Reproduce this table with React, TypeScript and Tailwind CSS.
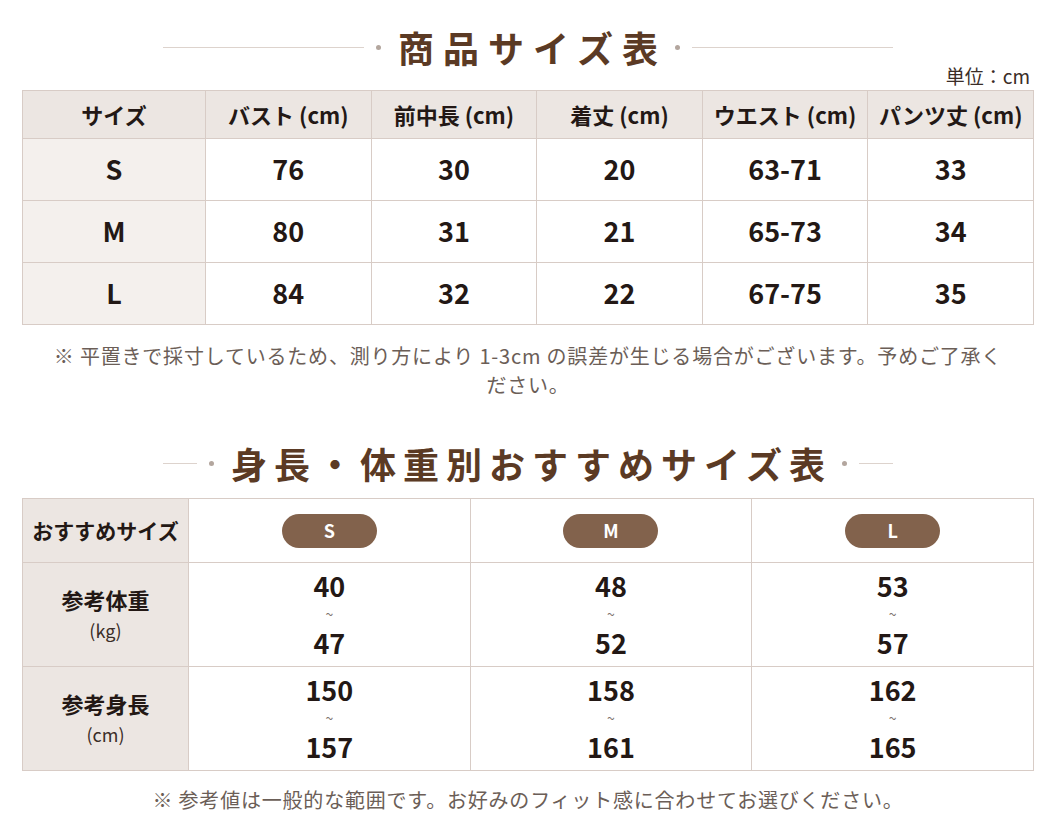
import React from 'react';

const font = { fontFamily: '"Noto Sans CJK JP", "Noto Sans", sans-serif' };

const headers = ['サイズ', 'バスト (cm)', '前中長 (cm)', '着丈 (cm)', 'ウエスト (cm)', 'パンツ丈 (cm)'];

const rows = [
  ['S', '76', '30', '20', '63-71', '33'],
  ['M', '80', '31', '21', '65-73', '34'],
  ['L', '84', '32', '22', '67-75', '35'],
];

const recommend = [
  { size: 'S', weight: ['40', '47'], height: ['150', '157'] },
  { size: 'M', weight: ['48', '52'], height: ['158', '161'] },
  { size: 'L', weight: ['53', '57'], height: ['162', '165'] },
];

function Heading({ text, wide }: { text: string; wide?: boolean }) {
  return (
    <div className="mx-auto flex h-[50px] w-[730px] items-center">
      <div className="h-px flex-1 bg-[#ddd3cd]" />
      <div className="ml-[12px] mr-[17px] h-[5px] w-[5px] rounded-full bg-[#b3a69e]" />
      <div
        className={
          wide
            ? 'text-[36px] font-bold leading-none tracking-[9px] mr-[-9px] text-[#5b3a24]'
            : 'text-[36px] font-bold leading-none tracking-[7px] mr-[-7px] text-[#5b3a24]'
        }
      >
        {text}
      </div>
      <div className="ml-[17px] mr-[12px] h-[5px] w-[5px] rounded-full bg-[#b3a69e]" />
      <div className="h-px flex-1 bg-[#ddd3cd]" />
    </div>
  );
}

function Range({ values }: { values: string[] }) {
  return (
    <div className="flex flex-col items-center text-[#231815]">
      <span className="text-[27px] font-bold leading-[30px]">{values[0]}</span>
      <span className="text-[14px] leading-[27px] text-[#7d726c]">~</span>
      <span className="text-[27px] font-bold leading-[30px]">{values[1]}</span>
    </div>
  );
}

export default function App() {
  return (
    <div style={font} className="w-[1056px] bg-white px-[22px] pt-[22px] pb-[12px] text-[#231815]">
      <Heading text="商品サイズ表" wide />
      <div className="mt-[-6px] h-[20px] pr-[4px] text-right text-[19px] leading-[20px] text-[#3a2d27]">単位：cm</div>

      <table className="mt-[4px] w-[1012px] table-fixed border-collapse">
        <colgroup>
          <col className="w-[183px]" />
          <col />
          <col />
          <col />
          <col />
          <col />
        </colgroup>
        <thead>
          <tr className="h-[48px] bg-[#ece6e2]">
            {headers.map((h) => (
              <th key={h} className="border border-[#d8ccc6] p-0 text-[22px] font-bold whitespace-nowrap">
                {h}
              </th>
            ))}
          </tr>
        </thead>
        <tbody>
          {rows.map((r) => (
            <tr key={r[0]} className="h-[62px]">
              {r.map((v, i) => (
                <td
                  key={i}
                  className={`border border-[#d8ccc6] p-0 text-center text-[27px] font-bold ${i === 0 ? 'bg-[#f4f0ed] text-[24px]' : 'bg-white'}`}
                >
                  {v}
                </td>
              ))}
            </tr>
          ))}
        </tbody>
      </table>

      <p className="mt-[16px] text-center text-[20px] leading-[29px] tracking-[0.8px] text-[#6b5e57]">
        ※ 平置きで採寸しているため、測り方により 1-3cm の誤差が生じる場合がございます。予めご了承く
        <br />
        ださい。
      </p>

      <div className="mt-[39px]">
        <Heading text="身長・体重別おすすめサイズ表" />
      </div>

      <table className="mt-[10px] w-[1012px] table-fixed border-collapse">
        <colgroup>
          <col className="w-[166px]" />
          <col />
          <col />
          <col />
        </colgroup>
        <tbody>
          <tr className="h-[64px]">
            <td className="border border-[#d8ccc6] bg-[#ece6e2] p-0 text-center text-[21px] font-bold whitespace-nowrap">
              おすすめサイズ
            </td>
            {recommend.map((r) => (
              <td key={r.size} className="border border-[#d8ccc6] p-0">
                <div className="mx-auto flex h-[34px] w-[95px] items-center justify-center rounded-full bg-[#82624c] text-[18px] font-bold text-white">
                  {r.size}
                </div>
              </td>
            ))}
          </tr>
          <tr className="h-[104px]">
            <td className="border border-[#d8ccc6] bg-[#ece6e2] p-0 text-center">
              <div className="text-[22px] font-bold leading-[31px]">参考体重</div>
              <div className="text-[18px] leading-[31px] text-[#3a2d27]">(kg)</div>
            </td>
            {recommend.map((r) => (
              <td key={r.size} className="border border-[#d8ccc6] p-0">
                <Range values={r.weight} />
              </td>
            ))}
          </tr>
          <tr className="h-[104px]">
            <td className="border border-[#d8ccc6] bg-[#ece6e2] p-0 text-center">
              <div className="text-[22px] font-bold leading-[31px]">参考身長</div>
              <div className="text-[18px] leading-[31px] text-[#3a2d27]">(cm)</div>
            </td>
            {recommend.map((r) => (
              <td key={r.size} className="border border-[#d8ccc6] p-0">
                <Range values={r.height} />
              </td>
            ))}
          </tr>
        </tbody>
      </table>

      <p className="mt-[15px] text-center text-[20px] leading-[28px] tracking-[0.8px] text-[#6b5e57]">
        ※ 参考値は一般的な範囲です。お好みのフィット感に合わせてお選びください。
      </p>
    </div>
  );
}
